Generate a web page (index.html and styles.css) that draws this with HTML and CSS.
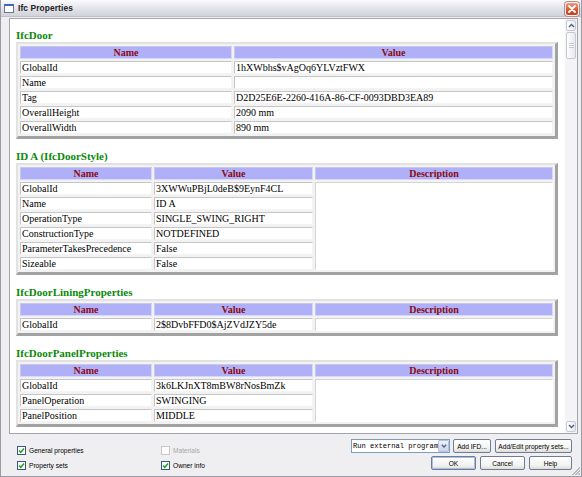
FILE: index.html
```html
<!DOCTYPE html>
<html>
<head>
<meta charset="utf-8">
<title>Ifc Properties</title>
<link rel="stylesheet" href="styles.css">
</head>
<body>
<div class="window">
  <div class="titlebar">
    <span class="app-icon"></span>
    <span class="title">Ifc Properties</span>
    <span class="close"><svg width="10" height="10" viewBox="0 0 10 10"><path d="M2 2 L8 8 M8 2 L2 8" stroke="#fff" stroke-width="1.8" stroke-linecap="round"/></svg></span>
  </div>
  <div class="client">
    <div class="viewer">
      <div class="doc">
        <h2 class="sec">IfcDoor</h2>
        <table class="props">
          <colgroup><col class="w212"><col class="w319"></colgroup>
          <tr><th>Name</th><th>Value</th></tr>
          <tr><td>GlobalId</td><td>1hXWbhs$vAgOq6YLVztFWX</td></tr>
          <tr><td>Name</td><td></td></tr>
          <tr><td>Tag</td><td>D2D25E6E-2260-416A-86-CF-0093DBD3EA89</td></tr>
          <tr><td>OverallHeight</td><td>2090 mm</td></tr>
          <tr><td>OverallWidth</td><td>890 mm</td></tr>
        </table>

        <h2 class="sec">ID A (IfcDoorStyle)</h2>
        <table class="props">
          <colgroup><col class="w132"><col class="w159"><col class="w238"></colgroup>
          <tr><th>Name</th><th>Value</th><th>Description</th></tr>
          <tr><td>GlobalId</td><td>3XWWuPBjL0deB$9EynF4CL</td><td class="desc" rowspan="6"></td></tr>
          <tr><td>Name</td><td>ID A</td></tr>
          <tr><td>OperationType</td><td>SINGLE_SWING_RIGHT</td></tr>
          <tr><td>ConstructionType</td><td>NOTDEFINED</td></tr>
          <tr><td>ParameterTakesPrecedence</td><td>False</td></tr>
          <tr><td>Sizeable</td><td>False</td></tr>
        </table>

        <h2 class="sec">IfcDoorLiningProperties</h2>
        <table class="props">
          <colgroup><col class="w132"><col class="w159"><col class="w238"></colgroup>
          <tr><th>Name</th><th>Value</th><th>Description</th></tr>
          <tr><td>GlobalId</td><td>2$8DvbFFD0$AjZVdJZY5de</td><td class="desc"></td></tr>
        </table>

        <h2 class="sec">IfcDoorPanelProperties</h2>
        <table class="props">
          <colgroup><col class="w132"><col class="w159"><col class="w238"></colgroup>
          <tr><th>Name</th><th>Value</th><th>Description</th></tr>
          <tr><td>GlobalId</td><td>3k6LKJnXT8mBW8rNosBmZk</td><td class="desc" rowspan="3"></td></tr>
          <tr><td>PanelOperation</td><td>SWINGING</td></tr>
          <tr><td>PanelPosition</td><td>MIDDLE</td></tr>
        </table>
      </div>
      <div class="vscroll">
        <div class="sb-btn"><svg width="7" height="5" viewBox="0 0 7 5"><path d="M1 4 L3.5 1.5 L6 4" fill="none" stroke="#4d6185" stroke-width="1.4"/></svg></div>
        <div class="sb-thumb"><span class="grip"></span></div>
        <div class="sb-track"></div>
        <div class="sb-btn"><svg width="7" height="5" viewBox="0 0 7 5"><path d="M1 1 L3.5 3.5 L6 1" fill="none" stroke="#4d6185" stroke-width="1.4"/></svg></div>
      </div>
    </div>

    <div class="controls">
      <div class="checks">
        <label class="chk"><span class="box on"><svg width="7" height="7" viewBox="0 0 7 7"><path d="M1 3.5 L2.8 5.3 L6 1.6" fill="none" stroke="#21a121" stroke-width="1.5"/></svg></span>General properties</label>
        <label class="chk disabled"><span class="box"></span>Materials</label>
        <label class="chk"><span class="box on"><svg width="7" height="7" viewBox="0 0 7 7"><path d="M1 3.5 L2.8 5.3 L6 1.6" fill="none" stroke="#21a121" stroke-width="1.5"/></svg></span>Property sets</label>
        <label class="chk"><span class="box on"><svg width="7" height="7" viewBox="0 0 7 7"><path d="M1 3.5 L2.8 5.3 L6 1.6" fill="none" stroke="#21a121" stroke-width="1.5"/></svg></span>Owner info</label>
      </div>
      <div class="actions">
        <div class="row">
          <div class="select"><span class="sel-text">Run external program</span><span class="sel-btn"><svg width="6" height="4" viewBox="0 0 6 4"><path d="M0.8 0.8 L3 3 L5.2 0.8" fill="none" stroke="#4d6185" stroke-width="1.3"/></svg></span></div>
          <button class="btn w37">Add IFD...</button>
          <button class="btn w77">Add/Edit property sets...</button>
        </div>
        <div class="row">
          <button class="btn w45 default">OK</button>
          <button class="btn w45">Cancel</button>
          <button class="btn w43">Help</button>
        </div>
      </div>
    </div>
    <span class="grip-corner"></span>
  </div>
</div>
</body>
</html>
```

FILE: styles.css
```css
* { box-sizing: border-box; }
html, body { margin: 0; padding: 0; }
body {
  width: 582px;
  height: 477px;
  overflow: hidden;
  background: #e6e6ea;
  font-family: "Liberation Sans", Arial, sans-serif;
}

.window {
  width: 582px;
  height: 477px;
  display: flex;
  flex-direction: column;
  background: #efeff1;
  border-left: 1px solid #9a9aa6;
  border-right: 1px solid #9a9aa6;
  border-bottom: 1px solid #9a9aa6;
}

/* ---------- title bar ---------- */
.titlebar {
  height: 17px;
  flex: none;
  display: flex;
  align-items: center;
  padding: 0 2px 0 2px;
  background: linear-gradient(#fbfbfd, #e6e6ec 45%, #d2d2da 100%);
  border-bottom: 1px solid #c0c0ca;
}
.app-icon {
  width: 10px;
  height: 9px;
  margin: 1px 4px 0 1px;
  background: #fff;
  border: 1px solid #6a7690;
  border-top: 2px solid #3a66c0;
}
.title {
  flex: 1;
  font: bold 8.4px "Liberation Sans", Arial, sans-serif;
  color: #222;
  letter-spacing: 0.1px;
}
.close {
  width: 14px;
  height: 14px;
  margin-top: 1px;
  border-radius: 3px;
  border: 1px solid #f4f4f4;
  background: linear-gradient(#ec9c84, #d4532f 60%, #c44422);
  display: flex;
  align-items: center;
  justify-content: center;
  box-shadow: 0 0 0 1px #b88a80;
}

/* ---------- client area ---------- */
.client {
  flex: 1;
  display: flex;
  flex-direction: column;
  padding: 1px 3px 0 8px;
  position: relative;
}
.viewer {
  height: 416px;
  flex: none;
  display: flex;
  background: #fff;
  border: 1px solid #a4a4ac;
  overflow: hidden;
}
.doc {
  flex: 1;
  padding: 10px 0 0 6px;
  overflow: hidden;
}

h2.sec {
  margin: 0;
  font: bold 11px/13px "Liberation Serif", "Times New Roman", serif;
  color: #0a8a0a;
}

table.props {
  width: 542px;
  table-layout: fixed;
  border-collapse: separate;
  border-spacing: 2px;
  background: #f2f2f2;
  border-style: solid;
  border-width: 2px 3px 3px 2px;
  border-color: #e2e2e2 #a2a2a2 #a2a2a2 #e2e2e2;
  margin-bottom: 11px;
  font: 10px/11px "Liberation Serif", "Times New Roman", serif;
  color: #000;
}
col.w212 { width: 212px; }
col.w319 { width: 319px; }
col.w132 { width: 132px; }
col.w159 { width: 159px; }
col.w238 { width: 238px; }

table.props th {
  height: 13px;
  padding: 0;
  background: #b0b0f8;
  color: #8a0a12;
  font-weight: bold;
  text-align: center;
  border: 1px solid;
  border-color: #c8c8e8 #d8d8f8 #d8d8f8 #c8c8e8;
  white-space: nowrap;
}
table.props td {
  height: 13px;
  padding: 0 1px;
  background: #fff;
  border: 1px solid;
  border-color: #c6c6c6 #f4f4f4 #f4f4f4 #c6c6c6;
  white-space: nowrap;
  overflow: hidden;
  vertical-align: middle;
}
table.props td.desc {
  border-color: #d4d4d4 #fff #fff #d4d4d4;
}

/* ---------- scrollbar ---------- */
.vscroll {
  width: 13px;
  flex: none;
  display: flex;
  flex-direction: column;
  padding: 1px 1px 1px 1px;
  background: #f4f4f7;
  border-left: 1px solid #fbfbfc;
}
.sb-btn {
  height: 11px;
  flex: none;
  display: flex;
  align-items: center;
  justify-content: center;
  border: 1px solid #c6c8d4;
  border-radius: 2px;
  background: linear-gradient(90deg, #fdfdfe, #e9e9ef);
}
.sb-thumb {
  height: 27px;
  flex: none;
  margin-top: 1px;
  border: 1px solid #c6c8d4;
  border-radius: 2px;
  background: linear-gradient(90deg, #fdfdfe, #e8e8ee);
  display: flex;
  align-items: center;
  justify-content: center;
}
.grip {
  width: 5px;
  height: 5px;
  border-top: 1px solid #c4c6d0;
  border-bottom: 1px solid #c4c6d0;
  background: linear-gradient(#fff 0 1px, #c4c6d0 1px 2px, #fff 2px 3px, #c4c6d0 3px 4px, transparent 4px);
}
.sb-track { flex: 1; }

/* ---------- bottom controls ---------- */
.controls {
  flex: 1;
  display: flex;
  justify-content: space-between;
  align-items: flex-start;
  padding: 5px 6px 0 8px;
  font: 6.6px "Liberation Sans", Arial, sans-serif;
  color: #000;
}
.checks {
  margin-top: 4px;
  display: grid;
  grid-template-columns: 144px auto;
  grid-auto-rows: 15px;
}
.chk {
  display: flex;
  align-items: center;
  gap: 3px;
}
.chk.disabled { color: #a8a8a8; }
.box {
  width: 9px;
  height: 9px;
  border: 1px solid #3c5680;
  background: #fff;
  display: flex;
  align-items: center;
  justify-content: center;
}
.chk.disabled .box { border-color: #c8c8c8; }

.actions {
  display: flex;
  flex-direction: column;
  align-items: flex-end;
  gap: 3px;
}
.row {
  display: flex;
  gap: 4px;
  align-items: center;
}
.select {
  width: 99px;
  height: 14px;
  display: flex;
  align-items: center;
  background: #fff;
  border: 1px solid #7f9db9;
  margin-right: -1px;
}
.sel-text {
  flex: 1;
  padding-left: 1px;
  font: 7.1px/12px "Liberation Mono", "Courier New", monospace;
  white-space: nowrap;
  overflow: hidden;
}
.sel-btn {
  width: 11px;
  height: 12px;
  display: flex;
  align-items: center;
  justify-content: center;
  border: 1px solid #b4c2dc;
  border-radius: 1px;
  background: linear-gradient(#eef2fa, #c8d4ec);
}
.btn {
  height: 14px;
  padding: 0;
  font: 6.6px "Liberation Sans", Arial, sans-serif;
  color: #000;
  border: 1px solid #6f7c94;
  border-radius: 2px;
  background: linear-gradient(#ffffff, #f2f2f0 70%, #dcdcd8);
  white-space: nowrap;
}
.btn.default {
  box-shadow: inset 0 0 0 1px #a8c0e8;
}
.w37 { width: 38px; }
.w77 { width: 77px; }
.w45 { width: 45px; }
.w43 { width: 43px; }

.grip-corner {
  position: absolute;
  right: 1px;
  bottom: 1px;
  width: 9px;
  height: 9px;
  background: linear-gradient(135deg, transparent 0 55%, #b8b8c0 55% 62%, transparent 62% 72%, #b8b8c0 72% 79%, transparent 79% 88%, #b8b8c0 88% 95%, transparent 95%);
}
```
